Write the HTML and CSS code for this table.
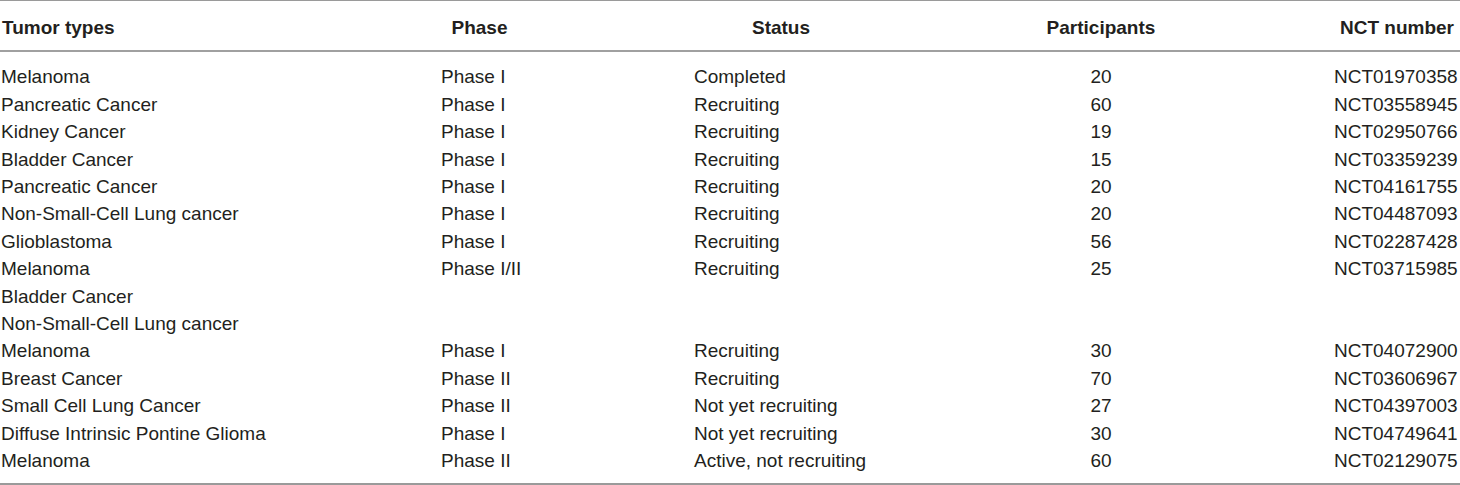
FILE: index.html
```html
<!DOCTYPE html>
<html lang="en">
<head>
<meta charset="utf-8">
<title>Clinical trials</title>
<link rel="stylesheet" href="styles.css">
</head>
<body>
<div class="table">
  <div class="row head">
    <div class="c c1">Tumor types</div>
    <div class="c c2">Phase</div>
    <div class="c c3">Status</div>
    <div class="c c4">Participants</div>
    <div class="c c5">NCT number</div>
  </div>
  <div class="body">
    <div class="row"><div class="c c1">Melanoma</div><div class="c c2">Phase I</div><div class="c c3">Completed</div><div class="c c4">20</div><div class="c c5">NCT01970358</div></div>
    <div class="row"><div class="c c1">Pancreatic Cancer</div><div class="c c2">Phase I</div><div class="c c3">Recruiting</div><div class="c c4">60</div><div class="c c5">NCT03558945</div></div>
    <div class="row"><div class="c c1">Kidney Cancer</div><div class="c c2">Phase I</div><div class="c c3">Recruiting</div><div class="c c4">19</div><div class="c c5">NCT02950766</div></div>
    <div class="row"><div class="c c1">Bladder Cancer</div><div class="c c2">Phase I</div><div class="c c3">Recruiting</div><div class="c c4">15</div><div class="c c5">NCT03359239</div></div>
    <div class="row"><div class="c c1">Pancreatic Cancer</div><div class="c c2">Phase I</div><div class="c c3">Recruiting</div><div class="c c4">20</div><div class="c c5">NCT04161755</div></div>
    <div class="row"><div class="c c1">Non-Small-Cell Lung cancer</div><div class="c c2">Phase I</div><div class="c c3">Recruiting</div><div class="c c4">20</div><div class="c c5">NCT04487093</div></div>
    <div class="row"><div class="c c1">Glioblastoma</div><div class="c c2">Phase I</div><div class="c c3">Recruiting</div><div class="c c4">56</div><div class="c c5">NCT02287428</div></div>
    <div class="row"><div class="c c1">Melanoma<br>Bladder Cancer<br>Non-Small-Cell Lung cancer</div><div class="c c2">Phase I/II</div><div class="c c3">Recruiting</div><div class="c c4">25</div><div class="c c5">NCT03715985</div></div>
    <div class="row"><div class="c c1">Melanoma</div><div class="c c2">Phase I</div><div class="c c3">Recruiting</div><div class="c c4">30</div><div class="c c5">NCT04072900</div></div>
    <div class="row"><div class="c c1">Breast Cancer</div><div class="c c2">Phase II</div><div class="c c3">Recruiting</div><div class="c c4">70</div><div class="c c5">NCT03606967</div></div>
    <div class="row"><div class="c c1">Small Cell Lung Cancer</div><div class="c c2">Phase II</div><div class="c c3">Not yet recruiting</div><div class="c c4">27</div><div class="c c5">NCT04397003</div></div>
    <div class="row"><div class="c c1">Diffuse Intrinsic Pontine Glioma</div><div class="c c2">Phase I</div><div class="c c3">Not yet recruiting</div><div class="c c4">30</div><div class="c c5">NCT04749641</div></div>
    <div class="row"><div class="c c1">Melanoma</div><div class="c c2">Phase II</div><div class="c c3">Active, not recruiting</div><div class="c c4">60</div><div class="c c5">NCT02129075</div></div>
  </div>
</div>
</body>
</html>
```

FILE: styles.css
```css
html, body {
  margin: 0;
  padding: 0;
  background: #ffffff;
}

body {
  font-family: "Liberation Sans", Arial, Helvetica, sans-serif;
  font-size: 19px;
  color: #231f20;
}

.table {
  width: 1460px;
  border-top: 1px solid #9a9a9a;
  border-bottom: 2px solid #9a9a9a;
  box-sizing: border-box;
}

.row {
  display: grid;
  grid-template-columns: 265px 78px 175px 115px 127px;
  column-gap: 175px;
  line-height: 27.4px;
  align-items: start;
}

.c {
  white-space: nowrap;
  padding-left: 1px;
}

.head {
  font-weight: bold;
  padding-top: 13px;
  padding-bottom: 9px;
  border-bottom: 2px solid #a0a0a0;
}

.head .c {
  text-align: center;
}

.head .c1 {
  text-align: left;
  padding-left: 2px;
}

.body {
  padding-top: 11px;
  padding-bottom: 8px;
}

.body .c4 {
  text-align: center;
}
```
